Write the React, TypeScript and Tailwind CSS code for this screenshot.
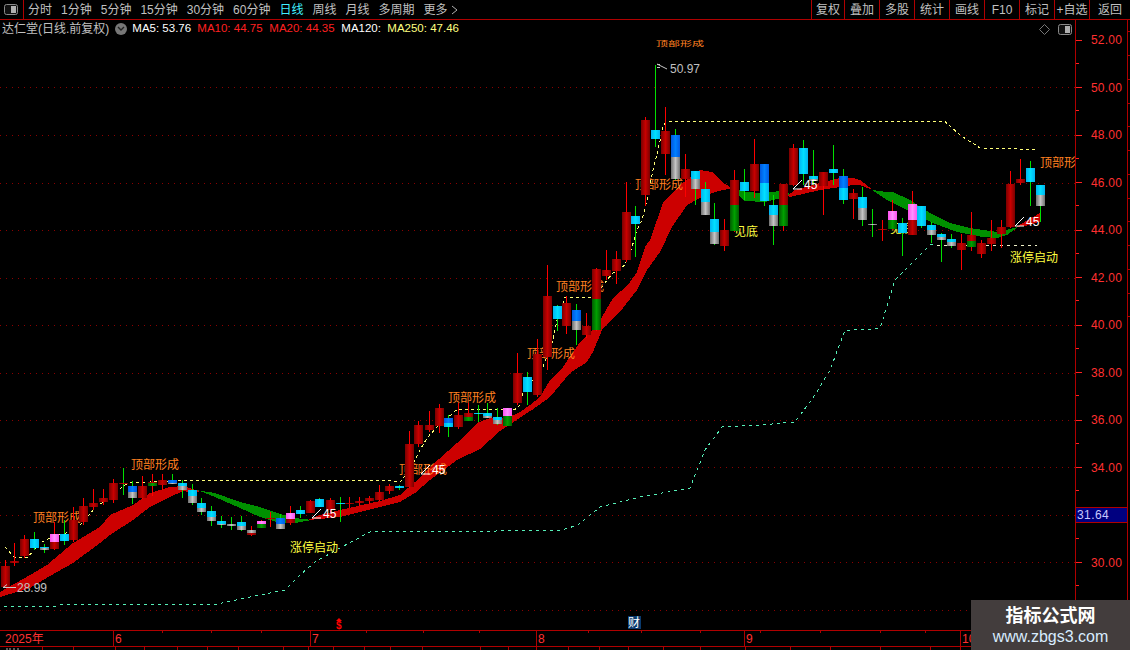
// Stock K-line screen (daily candles with MA ribbon)
const TABS = ["分时", "1分钟", "5分钟", "15分钟", "30分钟", "60分钟", "日线", "周线", "月线", "多周期", "更多"];
const TOOLS = [
  { label: "复权", w: "w-[33px]" },
  { label: "叠加", w: "w-[35px]" },
  { label: "多股", w: "w-[35px]" },
  { label: "统计", w: "w-[35px]" },
  { label: "画线", w: "w-[35px]" },
  { label: "F10", w: "w-[35px]" },
  { label: "标记", w: "w-[35px]" },
  { label: "+自选", w: "w-[35px]" },
  { label: "返回", w: "w-[41px]" },
];
const PRICES = ["52.00", "50.00", "48.00", "46.00", "44.00", "42.00", "40.00", "38.00", "36.00", "34.00", "32.00", "30.00", "28.00"];
const GRID = [87, 135, 183, 230, 278, 325, 373, 420, 467, 515, 562, 610];
const MONTHS = [
  { label: "2025年", w: "w-[113px]" },
  { label: "6", w: "w-[197px]" },
  { label: "7", w: "w-[226px]" },
  { label: "8", w: "w-[208px]" },
  { label: "9", w: "w-[216px]" },
  { label: "10", w: "w-[170px]" },
];

type Seg = [string, number, number];
// x, wick top, wick bottom, wick colour (R/G), body pieces top-down
const CANDLES: [number, number, number, string, Seg[]][] = [
  [5, 560, 588, "R", [["r", 566, 587]]],
  [14, 543, 566, "R", [["r", 561, 563]]],
  [24, 535, 558, "R", [["r", 539, 556]]],
  [34, 532, 550, "G", [["c", 539, 548]]],
  [44, 544, 553, "G", [["c", 547, 548], ["s", 548, 550]]],
  [54, 522, 550, "R", [["p", 534, 542], ["r", 542, 549]]],
  [64, 520, 545, "G", [["c", 534, 541]]],
  [73, 507, 542, "R", [["r", 520, 540]]],
  [83, 498, 525, "R", [["r", 506, 522]]],
  [93, 489, 510, "R", [["r", 503, 507]]],
  [103, 489, 505, "R", [["r", 498, 502]]],
  [113, 479, 503, "R", [["r", 483, 500]]],
  [123, 468, 495, "G", [["r", 483, 484]]],
  [132, 481, 504, "G", [["b", 486, 492], ["s", 492, 498]]],
  [142, 476, 499, "R", [["r", 486, 498]]],
  [152, 474, 496, "R", [["r", 482, 483], ["g", 483, 486]]],
  [162, 474, 490, "R", [["r", 480, 485]]],
  [172, 474, 484, "G", [["b", 480, 483], ["s", 483, 484]]],
  [182, 480, 498, "G", [["c", 483, 486], ["s", 486, 490]]],
  [192, 484, 505, "G", [["c", 490, 496], ["s", 496, 503]]],
  [201, 498, 515, "G", [["c", 503, 508], ["s", 508, 512]]],
  [211, 506, 526, "G", [["c", 511, 517], ["s", 517, 521]]],
  [221, 516, 528, "G", [["c", 521, 524], ["s", 524, 525]]],
  [231, 517, 530, "G", [["s", 524, 526]]],
  [241, 516, 531, "G", [["c", 522, 526], ["s", 526, 530]]],
  [251, 526, 536, "R", [["s", 530, 533], ["r", 533, 535]]],
  [261, 520, 528, "R", [["p", 521, 524], ["g", 524, 528]]],
  [270, 512, 527, "R", [["r", 518, 519]]],
  [280, 514, 529, "G", [["b", 518, 524], ["s", 524, 529]]],
  [290, 506, 525, "R", [["p", 513, 519], ["r", 519, 523]]],
  [300, 506, 518, "G", [["c", 510, 514]]],
  [310, 500, 513, "R", [["r", 501, 513]]],
  [319, 498, 507, "G", [["c", 499, 507]]],
  [330, 498, 512, "R", [["r", 500, 510]]],
  [340, 497, 522, "G", [["c", 503, 504]]],
  [349, 497, 508, "R", [["r", 503, 504]]],
  [359, 497, 506, "R", [["r", 501, 503]]],
  [369, 496, 504, "R", [["r", 498, 501]]],
  [379, 485, 501, "R", [["r", 492, 500]]],
  [389, 484, 494, "R", [["r", 486, 491]]],
  [399, 485, 490, "G", [["c", 486, 488]]],
  [409, 431, 488, "R", [["r", 444, 487]]],
  [418, 421, 447, "R", [["r", 425, 444]]],
  [429, 411, 432, "R", [["r", 425, 430]]],
  [439, 404, 433, "R", [["r", 408, 426]]],
  [448, 415, 437, "G", [["b", 418, 423], ["c", 423, 427]]],
  [458, 403, 429, "R", [["r", 415, 427]]],
  [468, 403, 421, "R", [["r", 413, 417], ["g", 417, 421]]],
  [478, 405, 422, "G", [["c", 413, 414]]],
  [487, 403, 418, "G", [["c", 413, 416], ["s", 416, 418]]],
  [497, 408, 425, "G", [["c", 417, 420], ["s", 420, 424]]],
  [507, 408, 426, "G", [["p", 408, 416], ["g", 416, 426]]],
  [517, 353, 405, "R", [["r", 373, 403]]],
  [527, 372, 405, "G", [["c", 377, 392]]],
  [537, 339, 397, "R", [["r", 354, 395]]],
  [547, 265, 370, "R", [["r", 296, 357]]],
  [557, 305, 331, "G", [["c", 306, 319]]],
  [566, 296, 334, "R", [["r", 303, 326]]],
  [576, 304, 345, "G", [["b", 310, 321], ["s", 321, 330]]],
  [586, 313, 338, "R", [["r", 326, 335]]],
  [596, 268, 331, "R", [["r", 269, 299], ["g", 299, 330]]],
  [606, 250, 280, "R", [["r", 270, 276]]],
  [616, 251, 284, "R", [["r", 259, 271]]],
  [626, 182, 262, "R", [["r", 212, 260]]],
  [635, 206, 257, "G", [["c", 216, 224]]],
  [645, 117, 206, "R", [["r", 120, 195]]],
  [655, 65, 147, "G", [["c", 130, 139]]],
  [665, 107, 175, "R", [["r", 131, 154]]],
  [675, 129, 180, "G", [["b", 135, 157], ["s", 157, 179]]],
  [685, 154, 197, "R", [["r", 169, 179]]],
  [695, 171, 205, "G", [["c", 171, 179], ["s", 179, 189]]],
  [705, 182, 215, "G", [["c", 189, 202], ["s", 202, 215]]],
  [714, 203, 245, "G", [["c", 219, 232], ["s", 232, 244]]],
  [724, 219, 251, "R", [["r", 230, 246]]],
  [734, 170, 232, "R", [["r", 180, 205], ["g", 205, 231]]],
  [744, 169, 200, "G", [["c", 182, 191]]],
  [754, 139, 198, "R", [["r", 164, 191]]],
  [764, 164, 206, "G", [["b", 164, 183], ["c", 183, 201]]],
  [773, 195, 245, "G", [["c", 205, 215], ["s", 215, 226]]],
  [783, 184, 231, "R", [["r", 184, 205], ["g", 205, 226]]],
  [793, 144, 186, "R", [["r", 148, 185]]],
  [803, 140, 185, "G", [["c", 148, 174]]],
  [813, 150, 185, "G", [["c", 176, 179], ["s", 179, 181]]],
  [823, 172, 215, "R", [["r", 172, 186]]],
  [833, 145, 185, "G", [["c", 169, 173]]],
  [843, 169, 204, "G", [["b", 176, 188], ["c", 188, 200]]],
  [853, 189, 219, "R", [["r", 193, 199]]],
  [862, 187, 226, "G", [["c", 197, 208], ["s", 208, 220]]],
  [872, 209, 237, "G", [["s", 224, 225]]],
  [882, 220, 241, "R", [["r", 229, 230]]],
  [892, 200, 230, "R", [["p", 211, 220], ["g", 220, 229]]],
  [902, 218, 256, "G", [["c", 223, 233]]],
  [912, 191, 235, "R", [["p", 204, 220], ["r", 220, 235]]],
  [921, 206, 228, "G", [["c", 206, 226]]],
  [931, 222, 243, "G", [["c", 225, 230], ["s", 230, 235]]],
  [941, 233, 262, "G", [["c", 234, 237], ["s", 237, 240]]],
  [951, 234, 248, "G", [["c", 239, 242], ["s", 242, 246]]],
  [961, 234, 270, "R", [["r", 243, 250]]],
  [971, 212, 251, "R", [["r", 235, 241], ["g", 241, 247]]],
  [981, 240, 258, "R", [["r", 243, 254]]],
  [991, 220, 251, "R", [["r", 238, 244]]],
  [1001, 220, 248, "R", [["r", 227, 234]]],
  [1010, 171, 228, "R", [["r", 184, 227]]],
  [1020, 159, 185, "R", [["r", 179, 183]]],
  [1030, 161, 206, "G", [["c", 168, 182]]],
  [1040, 185, 222, "G", [["c", 185, 195], ["s", 195, 206]]],
];

const FILL: Record<string, string> = {
  r: "url(#k-red)",
  g: "url(#k-green)",
  s: "url(#k-gray)",
  c: "url(#k-cyan)",
  b: "url(#k-blue)",
  p: "url(#k-pink)",
};

// ribbon: upper edge then lower edge read right to left
const RED_1 =
  "0,592 30,575 47,565 73,543 100,527 110,515 133,505 150,493 170,487 183,486 195,490 200,491 195,493 183,491 170,497 150,507 133,520 110,535 100,543 73,563 50,576 30,588 0,597";
const GREEN_1 = "196,490 215,493 240,502 260,507 280,514 295,518 312,520 295,523 280,523 260,517 240,508 215,497 200,491";
const RED_2 =
  "308,520 320,515 340,510 380,501 400,495 415,482 430,467 457,443 477,423 490,418 507,418 520,412 530,405 540,397 550,380 563,367 580,342 592,330 602,317 613,298 628,285 637,272 645,247 650,240 663,203 680,185 700,170 712,172 722,182 732,188 715,192 700,198 687,205 672,227 660,252 647,270 637,290 623,308 602,330 593,352 587,362 570,373 550,397 532,410 527,413 500,431 480,449 457,460 430,480 415,493 400,502 380,507 340,517 320,519";
const GREEN_2 = "730,187 745,192 765,193 787,190 790,196 765,202 745,201";
const RED_3 = "787,196 795,190 820,183 840,178 853,178 860,180 873,190 860,185 853,185 840,187 820,190 790,197";
const GREEN_3 =
  "872,190 887,192 893,192 910,200 930,213 950,223 970,228 983,230 998,232 1018,227 1007,235 997,238 983,237 957,232 933,223 917,215 887,200";
const RED_4 = "1016,227 1040,213 1041,221 1030,225";

const TOP_LINE =
  "5,547 14,557 28,557 40,543 50,538 75,530 80,525 95,508 110,497 125,485 130,483 180,480.5 390,480.5 400,482 410,470 420,450 427,438 437,427 453,413 457,409.5 515,409.5 520,405 523,393 543,367 553,340 557,320 565,297.5 595,297.5 607,280 613,273 625,265 632,247 637,230 642,220 647,200 653,170 658,150 663,127 666,121.5 945,121.5 960,135 980,148 1037,149.5";
const LOW_LINE =
  "4,606.5 55,606.5 60,604.5 215,604.5 245,598 285,590 300,575 315,562 340,548 370,532 560,530.5 578,525 600,507 640,497 690,488 705,450 722,427 760,425 795,422 815,395 830,370 845,330.5 880,328.5 895,280 930,245 937,243";

const ORANGE: [number, number][] = [
  [33, 522],
  [131, 469],
  [448, 402],
  [527, 358],
  [399, 474],
  [556, 291],
  [635, 189],
  [1040, 167],
];
const YELLOW: [string, number, number][] = [
  ["涨停启动", 290, 552],
  ["涨停启动", 1010, 262],
  ["见底", 734, 236],
  ["见底", 890, 233],
];
const ANGLES: [number, number][] = [
  [312, 518],
  [793, 189],
  [1015, 226],
  [421, 474],
];
const LOWER_TICKS = [42, 73, 115, 144, 177, 207, 238, 283, 308, 333, 364, 390, 422, 480, 508, 536, 568, 599, 628, 663, 700, 745, 790, 830, 880, 930, 960];
const UPPER_TICKS = [162, 211, 261, 366, 423, 479, 588, 641, 700, 760, 820, 880, 925];

function PanelIcon() {
  return (
    <svg width="14" height="11" viewBox="0 0 14 11" aria-hidden>
      <rect x="0.5" y="0.5" width="13" height="10" rx="2" fill="#111" stroke="#8a8a8a" />
      <rect x="7" y="2" width="5" height="7" fill="#b0b0b0" />
    </svg>
  );
}

function Chart() {
  return (
    <svg width="1075" height="610" viewBox="0 20 1075 610" className="block" aria-hidden>
      <defs>
        <linearGradient id="k-red" x1="0" y1="0" x2="1" y2="0">
          <stop offset="0" stopColor="#7a0000" />
          <stop offset="0.5" stopColor="#c80000" />
          <stop offset="1" stopColor="#7a0000" />
        </linearGradient>
        <linearGradient id="k-green" x1="0" y1="0" x2="1" y2="0">
          <stop offset="0" stopColor="#005c00" />
          <stop offset="0.5" stopColor="#00a000" />
          <stop offset="1" stopColor="#005c00" />
        </linearGradient>
        <linearGradient id="k-gray" x1="0" y1="0" x2="1" y2="0">
          <stop offset="0" stopColor="#707070" />
          <stop offset="0.5" stopColor="#c4c4c4" />
          <stop offset="1" stopColor="#707070" />
        </linearGradient>
        <linearGradient id="k-cyan" x1="0" y1="0" x2="1" y2="0">
          <stop offset="0" stopColor="#00b4f0" />
          <stop offset="0.5" stopColor="#00e0ff" />
          <stop offset="1" stopColor="#00b4f0" />
        </linearGradient>
        <linearGradient id="k-blue" x1="0" y1="0" x2="1" y2="0">
          <stop offset="0" stopColor="#0058e0" />
          <stop offset="0.5" stopColor="#0080ff" />
          <stop offset="1" stopColor="#0058e0" />
        </linearGradient>
        <linearGradient id="k-pink" x1="0" y1="0" x2="1" y2="0">
          <stop offset="0" stopColor="#ff50f0" />
          <stop offset="0.5" stopColor="#ff90ff" />
          <stop offset="1" stopColor="#ff50f0" />
        </linearGradient>
      </defs>

      <g shapeRendering="crispEdges">
        {GRID.map((y) => (
          <line key={y} x1="0" x2="1075" y1={y + 0.5} y2={y + 0.5} stroke="#8c0000" strokeDasharray="1 5" />
        ))}

        {/* MA ribbon */}
        <polygon points={RED_1} fill="#cc0000" />
        <polygon points={GREEN_1} fill="#009000" />
        <polygon points={RED_2} fill="#cc0000" />
        <polygon points={GREEN_2} fill="#009000" />
        <polygon points={RED_3} fill="#cc0000" />
        <polygon points={GREEN_3} fill="#009000" />
        <polygon points={RED_4} fill="#cc0000" />

        {/* stop lines */}
        <polyline points={TOP_LINE} fill="none" stroke="#ffff78" strokeDasharray="3 3" />
        <polyline points={LOW_LINE} fill="none" stroke="#55f0b8" strokeDasharray="3 4" />
        <line x1="937" x2="1037" y1="245.5" y2="245.5" stroke="#f0f0c8" strokeDasharray="3 4" />
      </g>

      <g fontSize="12" className="font-['Noto_Sans_CJK_SC',sans-serif]">
        {ORANGE.map(([x, y]) => (
          <text key={x} x={x} y={y} fill="#ff8020">
            顶部形成
          </text>
        ))}
        <text transform="translate(656 46) scale(1 0.55)" fill="#ff8020">
          顶部形成
        </text>
        {YELLOW.map(([t, x, y]) => (
          <text key={x} x={x} y={y} fill="#ffff40">
            {t}
          </text>
        ))}
      </g>

      {/* candles */}
      <g shapeRendering="crispEdges">
        {CANDLES.map(([x, wt, wb, wc, segs]) => (
          <g key={x}>
            <rect x={x} y={wt} width="1" height={wb - wt} fill={wc === "R" ? "#ff0000" : "#00e000"} />
            {segs.map(([k, t, b]) => (
              <rect key={t} x={x - 4} y={t} width="9" height={b - t} fill={FILL[k]} />
            ))}
          </g>
        ))}
      </g>

      {/* extreme price flags */}
      <g fill="none" stroke="#c8c8c8">
        <path d="M657 64.5h3M657 67.5h3M657 64l10 5" />
        <path d="M3 587.5h13M3 587.5l4 -3" />
      </g>
      <g fontSize="12" fill="#c0c0c0" className="font-['Liberation_Sans',sans-serif]">
        <text x="670" y="73">
          50.97
        </text>
        <text x="17" y="592">
          28.99
        </text>
      </g>

      {/* 45 degree marks */}
      {ANGLES.map(([x, y]) => (
        <g key={x}>
          <path d={`M${x + 9} ${y - 9}L${x} ${y}h9`} fill="none" stroke="#fff" />
          <text x={x + 11} y={y} fontSize="12" fill="#fff" className="font-['Liberation_Sans',sans-serif]">
            45
          </text>
        </g>
      ))}

      {/* event markers above the date axis */}
      <path d="M339 618l3 3h-6z" fill="#ff0000" />
      <text x="336" y="629" fontSize="10" fontWeight="700" fill="#ff0000" className="font-['Liberation_Sans',sans-serif]">
        $
      </text>
      <rect x="628" y="616" width="13" height="13" fill="#0a3a6e" />
      <text x="628" y="627" fontSize="12" fill="#fff" className="font-['Noto_Sans_CJK_SC',sans-serif]">
        财
      </text>
    </svg>
  );
}

export default function App() {
  return (
    <div className="relative flex h-[650px] w-[1130px] flex-col overflow-hidden bg-black font-['Liberation_Sans','Noto_Sans_CJK_SC',sans-serif] text-[12px]">
      {/* top toolbar */}
      <div className="flex h-[20px] shrink-0 items-stretch border-b border-[#b00000] text-[#c0c0c0]">
        <div className="flex w-[24px] items-center justify-center border-r border-[#b00000] pb-[1px] pr-[1px]">
          <PanelIcon />
        </div>
        <div className="ml-[4px] flex items-center gap-[9px]">
          {TABS.map((t) => (
            <span key={t} className={t === "日线" ? "text-[#40f0ff]" : ""}>
              {t}
            </span>
          ))}
          <svg width="7" height="10" viewBox="0 0 7 10" className="-ml-[6px]" aria-hidden>
            <path d="M1 1l5 4l-5 4" fill="none" stroke="#b0b0b0" />
          </svg>
        </div>
        <div className="ml-auto flex">
          {TOOLS.map((t) => (
            <div key={t.label} className={`${t.w} flex items-center justify-center border-l border-[#b00000]`}>
              {t.label}
            </div>
          ))}
        </div>
      </div>

      <div className="flex h-[610px] shrink-0">
        {/* chart */}
        <div className="relative w-[1075px] shrink-0 overflow-hidden">
          <Chart />
          <div className="absolute left-0 right-0 top-0 flex h-[18px] items-center text-[11.5px]">
            <span className="ml-[2px] text-[12px] text-[#c0c0c0]">达仁堂(日线.前复权)</span>
            <span className="ml-[6px] flex h-[12px] w-[12px] items-center justify-center rounded-full bg-[#777]">
              <svg width="8" height="6" viewBox="0 0 8 6" aria-hidden>
                <path d="M1 1l3 3l3 -3" fill="none" stroke="#222" strokeWidth="1.4" />
              </svg>
            </span>
            <span className="ml-[5px] w-[65px] text-white">MA5: 53.76</span>
            <span className="w-[72px] text-[#ff2020]">MA10: 44.75</span>
            <span className="w-[72px] text-[#ff2020]">MA20: 44.35</span>
            <span className="w-[46px] text-white">MA120:</span>
            <span className="text-[#ffff80]">MA250: 47.46</span>
            <span className="ml-auto mr-[3px] flex items-center gap-[8px]">
              <svg width="11" height="11" viewBox="0 0 11 11" aria-hidden>
                <path d="M5.5 0.5l5 5l-5 5l-5 -5z" fill="none" stroke="#777" />
              </svg>
              <PanelIcon />
            </span>
          </div>
        </div>

        {/* price axis */}
        <div className="relative w-[53px] shrink-0 overflow-hidden border-x border-[#b00000]">
          <div className="-mt-[3.75px] flex flex-col">
            {PRICES.map((p) => (
              <div key={p} className="relative flex h-[47.5px] items-center">
                <span className="h-px w-[6px] bg-[#ff2020]" />
                <span className="ml-[9px] text-[12px] tracking-[0.2px] text-[#ff3030]">{p}</span>
                <span className="absolute left-0 top-[-1px] h-px w-[3px] bg-[#ff2020]" />
              </div>
            ))}
          </div>
          <div className="absolute left-0 right-0 top-[487px] flex h-[16px] items-center border-y border-[#b00000] bg-[#000080] pl-[1px] text-[12px] tracking-[0.4px] text-[#c8c8ff]">
            31.64
          </div>
        </div>
        <div className="flex w-[2px] shrink-0 flex-col overflow-hidden">
          {PRICES.map((p) => (
            <div key={p} className="flex h-[23.75px] shrink-0 items-center">
              <span className="h-px w-full bg-[#b00000]" />
            </div>
          ))}
        </div>
      </div>

      {/* date axis */}
      <div className="relative flex h-[17px] shrink-0 border-y border-[#b00000] text-[#ff3030]">
        {MONTHS.map((m) => (
          <div key={m.label} className={`${m.w} flex shrink-0 items-center border-l border-[#b00000] pl-[1px] first:border-l-0 first:pl-[5px]`}>
            {m.label}
          </div>
        ))}
        <svg width="1130" height="3" className="absolute left-0 top-0" aria-hidden>
          {UPPER_TICKS.map((x) => (
            <rect key={x} x={x} width="1" height="2" fill="#b00000" />
          ))}
        </svg>
      </div>
      <svg width="1130" height="3" className="block shrink-0" aria-hidden>
        {LOWER_TICKS.map((x) => (
          <rect key={x} x={x} width="1" height="3" fill="#b00000" />
        ))}
        <path d="M7 1v2M10 1v2M14 1v2M18 1v2" stroke="#b0b0b0" />
      </svg>

      {/* watermark */}
      <div className="absolute bottom-0 right-0 flex h-[50px] w-[159px] flex-col items-center justify-center bg-[#433d3d]">
        <span className="text-[18px] font-bold leading-[24px] text-white">指标公式网</span>
        <span className="text-[16px] leading-[18px] text-[#d8ecff]">www.zbgs3.com</span>
      </div>
    </div>
  );
}
